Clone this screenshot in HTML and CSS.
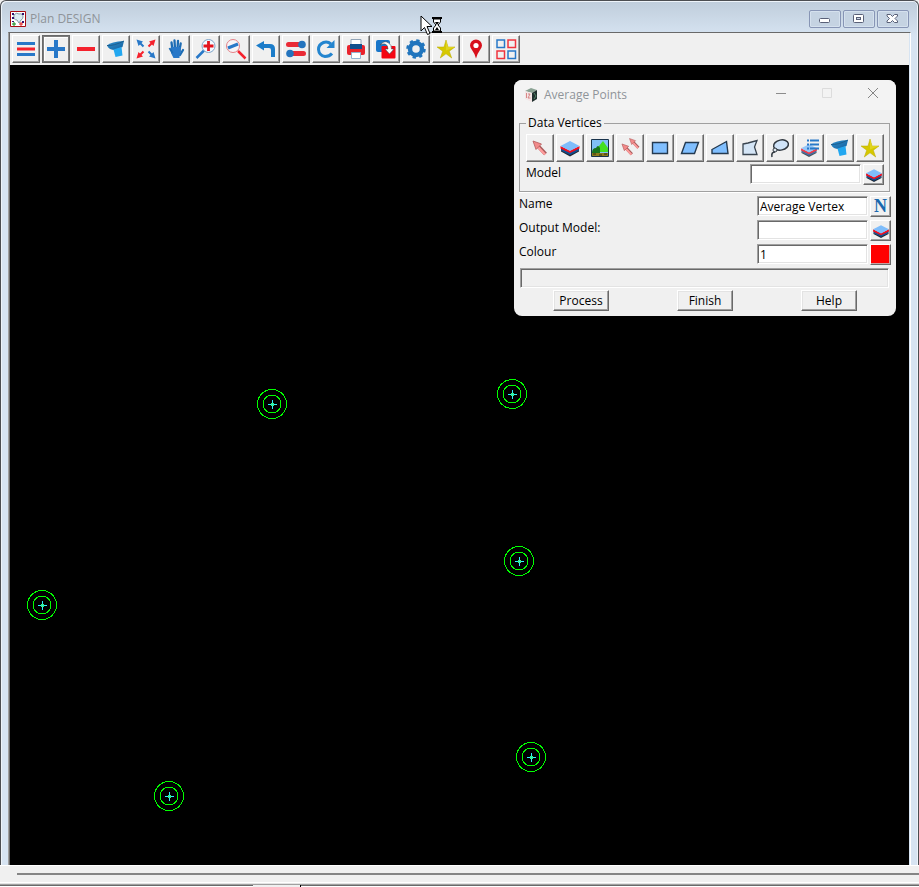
FILE: index.html
```html
<!DOCTYPE html>
<html lang="en">
<head>
<meta charset="utf-8">
<title>Plan DESIGN</title>
<link rel="stylesheet" href="styles.css">
</head>
<body>
<svg class="defs" aria-hidden="true">
  <defs>
    <linearGradient id="steel" x1="0" y1="0" x2="1" y2="1"><stop offset="0" stop-color="#2b8fd0"/><stop offset="1" stop-color="#17609c"/></linearGradient>
  </defs>
  <symbol id="funnel" viewBox="0 0 24 24">
    <path d="M3 8.500Q7 4.500 20 4L18.500 10L11 13Q5 13 3 8.500Z" fill="url(#steel)"/>
    <path d="M9.500 12.500L17.500 10L18.500 18.500L11.500 20Z" fill="#22a7f0"/>
    <path d="M3 8.500Q10 9 20 4" fill="none" stroke="#1d5f8f"/>
  </symbol>
  <symbol id="star" viewBox="0 0 24 24">
    <path d="M12 3L14 10H21L15.300 14.200L17.700 21L12 16.800L6.300 21L8.700 14.200L3 10H10Z" fill="#d6c800" stroke="#b9a900" stroke-width=".5"/>
    <path d="M12 3L14 10H21L12 13.500Z" fill="#e0d420"/>
  </symbol>
  <symbol id="layers" viewBox="0 0 24 24">
    <path d="M3 14L12 18L21 14V15.500L12 20.500L3 15.500Z" fill="#222b38"/>
    <path d="M3 11.500L12 16L21 11.500V14.500L12 19L3 14.500Z" fill="#0d4f94"/>
    <path d="M2.500 10L12 14.500L21.500 10V12.500L12 17L2.500 12.500Z" fill="#f01020"/>
    <path d="M2.500 10L12 5L21.500 10L12 15Z" fill="#7fbdfb"/>
  </symbol>
  <symbol id="pointer" viewBox="0 0 24 24">
    <path d="M9.500 9.500L17.500 18" stroke="#a85c5c" stroke-width="4"/>
    <path d="M9 10L17 18.500" stroke="#ff9c9c" stroke-width="2.500"/>
    <path d="M5 5L13.500 8L8 13.500Z" fill="#f28a8a" stroke="#b35a5a" stroke-width=".8"/>
  </symbol>
  <symbol id="marker" viewBox="-16 -16 32 32">
    <g fill="none" stroke="#0f0" shape-rendering="crispEdges">
      <circle r="14.500"/><circle r="9"/>
    </g>
    <path d="M-4 .5H5M.5 -4V5" stroke="#2cf0ff" shape-rendering="crispEdges"/>
    <path d="M-1 -1H2V2H-1Z" fill="#37f08b" shape-rendering="crispEdges"/>
    <path d="M0 0H1V1H0Z" fill="#2cf0ff" shape-rendering="crispEdges"/>
  </symbol>
</svg>

<main class="window">
  <header class="titlebar">
    <svg class="app-icon" viewBox="0 0 16 16" aria-hidden="true">
      <path d="M.5 .5H15.500V15.500H.5Z" fill="#fff" stroke="#a80d12"/>
      <path d="M4 4Q6 1 9 3Q13 2 13 6Q13 8 11 9L9 12L7 9Q3 9 4 4Z" fill="#dcebf2" stroke="#8099a5"/>
      <path d="M2 2H4V4H2ZM2 6H4V8H2ZM12 10H14V12H12ZM12 2H14V4H12ZM2 10H4V11H2Z" fill="#35106e"/>
      <path d="M4 11V15M2 13H6" stroke="#108a18"/><path d="M11 11V15M9 13H13" stroke="#e01818"/>
    </svg>
    <h1 class="title">Plan DESIGN</h1>
    <div class="caption-buttons">
      <button class="caption" aria-label="Minimise"><svg viewBox="0 0 14 12"><rect x="1.500" y="5.500" width="10" height="4" rx="1" fill="#fff" stroke="#596077"/></svg></button>
      <button class="caption" aria-label="Restore"><svg viewBox="0 0 14 12"><rect x="1.500" y="1.500" width="10" height="8" rx="1" fill="#fff" stroke="#596077"/><rect x="4.500" y="4.500" width="4" height="2" fill="#cbd7e7" stroke="#596077"/></svg></button>
      <button class="caption" aria-label="Close"><svg viewBox="0 0 14 12"><path d="M1 1.500H4.500L6.500 3.500L8.500 1.500H11.500V3L9 5.500L11.500 8V9.500H8.500L6.500 7.500L4.500 9.500H1V8L3.500 5.500L1 3Z" fill="#fff" stroke="#596077"/></svg></button>
    </div>
  </header>

  <div class="client">
    <nav class="toolbar" aria-label="Plan tools">
      <button class="tool" aria-label="Menu"><svg viewBox="0 0 24 24"><path d="M3 6.500H21M3 17.500H21" stroke="#2878c8" stroke-width="3"/><path d="M3 12H21" stroke="#f5222d" stroke-width="3"/></svg></button>
      <button class="tool active" aria-label="Add"><svg viewBox="0 0 24 24"><path d="M3 12H21M12 3V21" stroke="#2878c8" stroke-width="4"/></svg></button>
      <button class="tool" aria-label="Remove"><svg viewBox="0 0 24 24"><path d="M3 12H21" stroke="#f5222d" stroke-width="4"/></svg></button>
      <button class="tool" aria-label="Filter"><svg><use href="#funnel"/></svg></button>
      <button class="tool" aria-label="Fit"><svg viewBox="0 0 24 24">
        <path d="M5 5L9.500 9.500M14.500 14.500L19 19" stroke="#2878c8" stroke-width="2"/><path d="M2.500 2.500L9 4.500L4.500 9ZM21.500 21.500L19.500 15L15 19.500Z" fill="#2878c8"/>
        <path d="M19 5L14.500 9.500M9.500 14.500L5 19" stroke="#f5222d" stroke-width="2"/><path d="M21.500 2.500L15 4.500L19.500 9ZM2.500 21.500L4.500 15L9 19.500Z" fill="#f5222d"/></svg></button>
      <button class="tool" aria-label="Pan"><svg viewBox="0 0 24 24"><g stroke="#1c6cb4" stroke-linecap="round" stroke-width="2.300"><path d="M8.500 13L7.500 5.500M11 12L10.500 3.500M13.500 12L14 4M15.500 13L16.700 6.500M16 18L19 13"/></g><path d="M7.500 10H16.500L17 15L15.500 18V21H9.500L7 16Z" fill="#2878c8"/><path d="M5.500 11L8.500 16" stroke="#1c6cb4" stroke-width="2"/></svg></button>
      <button class="tool" aria-label="Zoom in"><svg viewBox="0 0 24 24"><path d="M2.500 21L10 13.500" stroke="#2878c8" stroke-width="2.500"/><circle cx="14.500" cy="9" r="6.500" fill="#f4faff" stroke="#7fa5c9"/><path d="M9.500 9H19.500M14.500 4V14" stroke="#e3141e" stroke-width="2.800"/></svg></button>
      <button class="tool" aria-label="Zoom out"><svg viewBox="0 0 24 24"><path d="M14 14L21.500 21.500" stroke="#f5222d" stroke-width="2.500"/><circle cx="9" cy="9" r="6.500" fill="#f7f4f7" stroke="#e58187"/><path d="M4 11L14 7" stroke="#2878c8" stroke-width="3"/></svg></button>
      <button class="tool" aria-label="Undo"><svg viewBox="0 0 24 24"><path d="M2 8.500L10 4V7H16Q21 7 21 12V20H17V13Q17 11 15 11H10V13.500Z" fill="#1b7cc9"/></svg></button>
      <button class="tool" aria-label="Toggles"><svg viewBox="0 0 24 24"><path d="M4.500 7.500H18M6 16.500H19.500" stroke="#ea2b36" stroke-width="5" stroke-linecap="round"/><circle cx="18" cy="7.500" r="3.800" fill="#2474bd"/><circle cx="6" cy="16.500" r="3.800" fill="#2474bd"/></svg></button>
      <button class="tool" aria-label="Redraw"><svg viewBox="0 0 24 24"><path d="M17 7Q13.500 4 9.500 5.500Q4.500 7.500 4.500 12.500Q5 18.500 11 19.500Q15.500 19.500 18 16.500" fill="none" stroke="#2485cf" stroke-width="3"/><path d="M20.500 3V11H12.500Z" fill="#2485cf"/></svg></button>
      <button class="tool" aria-label="Print"><svg viewBox="0 0 24 24"><rect x="3" y="8" width="18" height="10" rx="2" fill="#e9232c"/><path d="M7 2.500H17V8H7Z" fill="#fff" stroke="#91a4b7"/><path d="M6 7H18V12H6Z" fill="#12508d"/><path d="M7.500 15.500H16.500V21.500H7.500Z" fill="#fff" stroke="#91b4d2"/></svg></button>
      <button class="tool" aria-label="Copy view"><svg viewBox="0 0 24 24"><rect x="2" y="3" width="14" height="12" rx="2" fill="#1976c9"/><rect x="7.500" y="9" width="14" height="12.500" rx="1" fill="#f40613"/><path d="M6 8Q10 3 14 5.500Q18 8 17.500 12H20L15.500 17L11 12H14Q14 8 11 7Q8 6.500 6 8Z" fill="#fff" stroke="#424b58" stroke-width=".6"/></svg></button>
      <button class="tool" aria-label="Settings"><svg viewBox="0 0 24 24"><circle cx="12" cy="12" r="6" fill="none" stroke="#2175bd" stroke-width="4.500"/><circle cx="12" cy="12" r="8.500" fill="none" stroke="#2175bd" stroke-width="2.500" stroke-dasharray="3.300 3.375"/></svg></button>
      <button class="tool" aria-label="Favourites"><svg><use href="#star"/></svg></button>
      <button class="tool" aria-label="Location"><svg viewBox="0 0 24 24"><path d="M12 21.500Q11 17 8 13Q6 10 6 8.500A6 6 0 0 1 18 8.500Q18 10 16 13Q13 17 12 21.500Z" fill="#d8101c"/><circle cx="12" cy="8.500" r="2.600" fill="#fff"/></svg></button>
      <button class="tool" aria-label="Tile views"><svg viewBox="0 0 24 24" fill="none" stroke-width="1.500"><path d="M3 3H10.500V10.500H3ZM14 14H21.500V21.500H14Z" stroke="#2878c8"/><path d="M14 3H21.500V10.500H14ZM3 14H10.500V21.500H3Z" stroke="#ef343e"/></svg></button>
    </nav>

    <section class="canvas" aria-label="Plan view">
      <svg class="points" aria-hidden="true">
        <use href="#marker" x="246" y="323" width="32" height="32"/>
        <use href="#marker" x="486" y="313" width="32" height="32"/>
        <use href="#marker" x="493" y="480" width="32" height="32"/>
        <use href="#marker" x="16" y="524" width="32" height="32"/>
        <use href="#marker" x="505" y="676" width="32" height="32"/>
        <use href="#marker" x="143" y="715" width="32" height="32"/>
      </svg>

      <form class="dialog" aria-label="Average Points">
        <header class="dialog-title">
          <svg class="dialog-icon" viewBox="0 0 14 16" aria-hidden="true"><path d="M1 4L7 1L13 3L8 6Z" fill="#8ba394"/><path d="M8 6L13 3V12L8 15Z" fill="#20302e"/><path d="M1 4L8 6V15L1 12Z" fill="#f3e6e6"/><path d="M2.500 6V11M4 7H6L4 11H6.500" fill="none" stroke="#d07070" stroke-width=".8"/><path d="M10 6L12 9L10 12" stroke="#4f8267" fill="none"/></svg>
          <h2 class="title">Average Points</h2>
          <button type="button" class="flat" aria-label="Minimise"><svg viewBox="0 0 12 12"><path d="M1 6.500H11" stroke="#8c8c8c"/></svg></button>
          <button type="button" class="flat" aria-label="Maximise" disabled><svg viewBox="0 0 12 12"><path d="M1.500 1.500H10.500V10.500H1.500Z" fill="none" stroke="#dcdcdc"/></svg></button>
          <button type="button" class="flat" aria-label="Close"><svg viewBox="0 0 12 12"><path d="M1 1L11 11M11 1L1 11" stroke="#858585"/></svg></button>
        </header>

        <div class="dialog-body">
          <fieldset class="group">
            <legend>Data Vertices</legend>
            <div class="picks">
              <button type="button" class="tool" aria-label="Pick string"><svg><use href="#pointer"/></svg></button>
              <button type="button" class="tool" aria-label="Model"><svg><use href="#layers"/></svg></button>
              <button type="button" class="tool" aria-label="View"><svg viewBox="0 0 24 24"><path d="M3.500 3.500H20.500V20.500H3.500Z" fill="#80bff8" stroke="#17324a"/><path d="M10 16L11 10L15 5L20 12V16Z" fill="#43df20"/><path d="M4 17Q4 12 8 12Q10 8 12 12V18H4Z" fill="#18741d"/><path d="M4 17H20V20H4Z" fill="#8b7a19"/><path d="M5 18H8M11 19H14M16 18H19" stroke="#332d12"/></svg></button>
              <button type="button" class="tool" aria-label="Pick several"><svg viewBox="0 0 24 24"><use href="#pointer" x="0" y="4" width="19" height="19"/><use href="#pointer" x="8" y="-1" width="17" height="17"/></svg></button>
              <button type="button" class="tool" aria-label="Rectangle"><svg viewBox="0 0 24 24"><path d="M4.500 6.500H19.500V17.500H4.500Z" fill="#80bfff" stroke="#243a50" stroke-width="1.400"/></svg></button>
              <button type="button" class="tool" aria-label="Parallelogram"><svg viewBox="0 0 24 24"><path d="M7.500 6.500H20.500L16.500 17.500H3.500Z" fill="#80bfff" stroke="#243a50" stroke-width="1.400"/></svg></button>
              <button type="button" class="tool" aria-label="Trapezoid"><svg viewBox="0 0 24 24"><path d="M4 13.500L18.500 5.500L20 17.500H4Z" fill="#80bfff" stroke="#243a50" stroke-width="1.400"/></svg></button>
              <button type="button" class="tool" aria-label="Polygon"><svg viewBox="0 0 24 24"><path d="M5 8L10 7L19 4.500L16.500 11L19 18.500H5Z" fill="#d4e5f6" stroke="#39444f" stroke-width="1.300"/></svg></button>
              <button type="button" class="tool" aria-label="Lasso"><svg viewBox="0 0 24 24"><ellipse cx="13" cy="9" rx="7.500" ry="5" transform="rotate(-12 13 9)" fill="#cfe3f8" stroke="#303840" stroke-width="1.500"/><circle cx="7" cy="14" r="2" fill="#dfe8ef" stroke="#303840"/><path d="M7 16Q3 16 4 21" fill="none" stroke="#303840" stroke-width="1.500"/></svg></button>
              <button type="button" class="tool" aria-label="Model list"><svg viewBox="0 0 24 24"><g opacity=".8"><use href="#layers" x="1" y="4" width="20" height="20"/></g><path d="M9 4.500H11M9 8.500H11M9 12.500H11M12 4.500H21M12 8.500H21M12 12.500H21" stroke="#2878c8" stroke-width="2"/></svg></button>
              <button type="button" class="tool" aria-label="Filter"><svg><use href="#funnel"/></svg></button>
              <button type="button" class="tool" aria-label="Favourites"><svg><use href="#star"/></svg></button>
            </div>
            <div class="row">
              <label for="model">Model</label>
              <input id="model" type="text">
              <button type="button" class="tool small" aria-label="Choose model"><svg><use href="#layers"/></svg></button>
            </div>
          </fieldset>

          <div class="fields">
            <div class="row">
              <label for="name">Name</label>
              <input id="name" type="text" value="Average Vertex">
              <button type="button" class="tool small letter" aria-label="Choose name">N</button>
            </div>
            <div class="row">
              <label for="output">Output Model:</label>
              <input id="output" type="text">
              <button type="button" class="tool small" aria-label="Choose output model"><svg><use href="#layers"/></svg></button>
            </div>
            <div class="row">
              <label for="colour">Colour</label>
              <input id="colour" type="text" value="1">
              <button type="button" class="tool small swatch" aria-label="Choose colour"></button>
            </div>
          </div>

          <div class="message" role="status"></div>
          <div class="actions">
            <button type="button" class="action">Process</button>
            <button type="button" class="action">Finish</button>
            <button type="button" class="action">Help</button>
          </div>
        </div>
      </form>
    </section>
  </div>

  <svg class="cursor" viewBox="0 0 24 22" aria-hidden="true">
    <path d="M1 1V16L4.500 12.500L7.500 19.500L10 18.500L7 11.500H12Z" fill="#fff" stroke="#000"/>
    <path d="M12 3H22M12 17H22" stroke="#000" stroke-width="2"/>
    <path d="M13.500 4V7L16 10L13.500 13V16H20.500V13L18 10L20.500 7V4Z" fill="#fff" stroke="#000"/>
    <path d="M15 7H19L17 10ZM17 12L19 15H15Z" fill="#000"/>
  </svg>
</main>

<footer class="dock">
  <div class="rule"></div>
  <div class="edge"><span class="tab"></span></div>
</footer>
</body>
</html>
```

FILE: styles.css
```css
* { box-sizing: border-box; }

body {
  margin: 0;
  min-height: 100vh;
  display: flex;
  flex-direction: column;
  background: #f0f0f0;
  color: #000;
  font: 12px/16px "Open Sans", "Noto Sans", sans-serif;
}

.defs { position: absolute; width: 0; height: 0; }

button { padding: 0; font: inherit; color: inherit; }

.title { margin: 0; font-size: 12px; line-height: 16px; font-weight: 400; color: #8f9499; }

/* Main window */
.window {
  position: relative;
  flex: 1;
  display: flex;
  flex-direction: column;
  padding: 0 7px;
  background: linear-gradient(#bfcddb, #d7e4f2 36px);
  border: 1px solid #4c4e52;
  border-bottom: 0;
  border-radius: 6px 6px 0 0;
  box-shadow: inset 1px 1px #eef4fa, inset -1px 0 #eef4fa;
}

.titlebar {
  display: flex;
  align-items: center;
  height: 31px;
  padding: 5px 2px 0;
}

.app-icon { width: 16px; height: 16px; margin-right: 4px; }

.caption-buttons { display: flex; gap: 2px; margin-left: auto; }

.caption {
  display: grid;
  place-items: center;
  width: 32px;
  height: 18px;
  background: #c5d3e2;
  border: 1px solid #8795b5;
  border-radius: 2px;
  box-shadow: inset 0 0 0 1px #d5e1ee;
}

.caption svg { width: 14px; height: 12px; }

.client {
  flex: 1;
  display: flex;
  flex-direction: column;
  border: solid;
  border-width: 1px 1px 0;
  border-color: #696969 #fff #fff #a0a0a0;
  box-shadow: inset 1px 0 #696969;
  padding: 0 1px;
}

.toolbar {
  display: flex;
  flex-wrap: wrap;
  gap: 2px;
  padding: 2px;
  background: #f0f0f0;
}

.tool {
  display: grid;
  place-items: center;
  width: 28px;
  height: 28px;
  background: #f0f0f0;
  border: 1px solid;
  border-color: #fff #696969 #696969 #fff;
  box-shadow: inset -1px -1px #a0a0a0;
}

.tool svg { width: 24px; height: 24px; }

.tool.active { border-color: #696969; box-shadow: inset 0 0 0 1px #7c7c7c, inset 2px 2px #fff; }

.canvas { position: relative; flex: 1; background: #000; }

.points { position: absolute; inset: 0; width: 100%; height: 100%; }

/* Floating dialog */
.dialog {
  position: absolute;
  top: 15px;
  right: 13px;
  width: 382px;
  overflow: hidden;
  background: #f0f0f0;
  border-radius: 8px;
}

.dialog-title {
  display: flex;
  align-items: center;
  height: 30px;
  padding-left: 10px;
  background: #f3f3f3;
}

.dialog-icon { width: 14px; height: 16px; margin-right: 6px; }

.dialog-title .title { margin-right: auto; }

.flat { width: 46px; height: 28px; border: 0; background: none; }

.flat svg { width: 12px; height: 12px; }

.dialog-body { padding: 5px; }

.group {
  min-width: 0;
  margin: 0 1px 0 0;
  padding: 3px 4px 6px 6px;
  border: 1px solid #a0a0a0;
  box-shadow: 0 1px #fff;
}

.group legend { margin-left: 0; padding: 0 2px; }

.picks { display: flex; gap: 2px; }

.row {
  display: grid;
  grid-template-columns: 1fr 111px 21px;
  column-gap: 2px;
  height: 24px;
  align-items: center;
}

.row label { align-self: start; padding-top: 2px; }

.group .row { height: 22px; margin: 1px 1px 0 0; }

.row input {
  width: 100%;
  height: 20px;
  padding: 0 2px;
  border: 1px solid;
  border-color: #a0a0a0 #fff #fff #a0a0a0;
  border-radius: 0;
  box-shadow: inset 1px 1px #696969, inset -1px -1px #e3e3e3;
  background: #fff;
  font: inherit;
  outline: 0;
}

.small { width: 21px; height: 21px; }

.small svg { width: 20px; height: 20px; }

.letter {
  color: #1868ae;
  font: bold 18px/18px "Liberation Serif", serif;
}

.swatch { background: #f00; box-shadow: inset -1px -1px #c9a0a0; }

.fields { padding-top: 2px; }

.message {
  height: 20px;
  margin: 2px 2px 2px 1px;
  border: 1px solid;
  border-color: #a0a0a0 #fff #fff #a0a0a0;
  box-shadow: inset 1px 1px #696969, inset -1px -1px #e3e3e3;
}

.actions { display: grid; grid-template-columns: repeat(3, 1fr); justify-items: center; }

.action {
  width: 56px;
  height: 21px;
  background: #f0f0f0;
  border: 1px solid;
  border-color: #fff #696969 #696969 #fff;
  box-shadow: inset -1px -1px #a0a0a0, inset 1px 1px #e3e3e3;
}

.cursor { position: absolute; left: 419px; top: 14px; width: 24px; height: 22px; }

/* Strip under the window */
.dock { border-top: 1px solid #fff; }

.rule { height: 2px; margin: 7px 0 7px 17px; background: #858585; }

.edge {
  height: 5px;
  padding-left: 253px;
  background: linear-gradient(#fff 1px, #e3e3e3 1px 2px, #a0a0a0 2px 3px, #696969 3px 4px, #fff 4px);
}

.tab {
  display: block;
  width: 48px;
  height: 5px;
  border-right: 1px solid #000;
  background: #f0f0f0;
  clip-path: inset(3px 0 0);
}
```
